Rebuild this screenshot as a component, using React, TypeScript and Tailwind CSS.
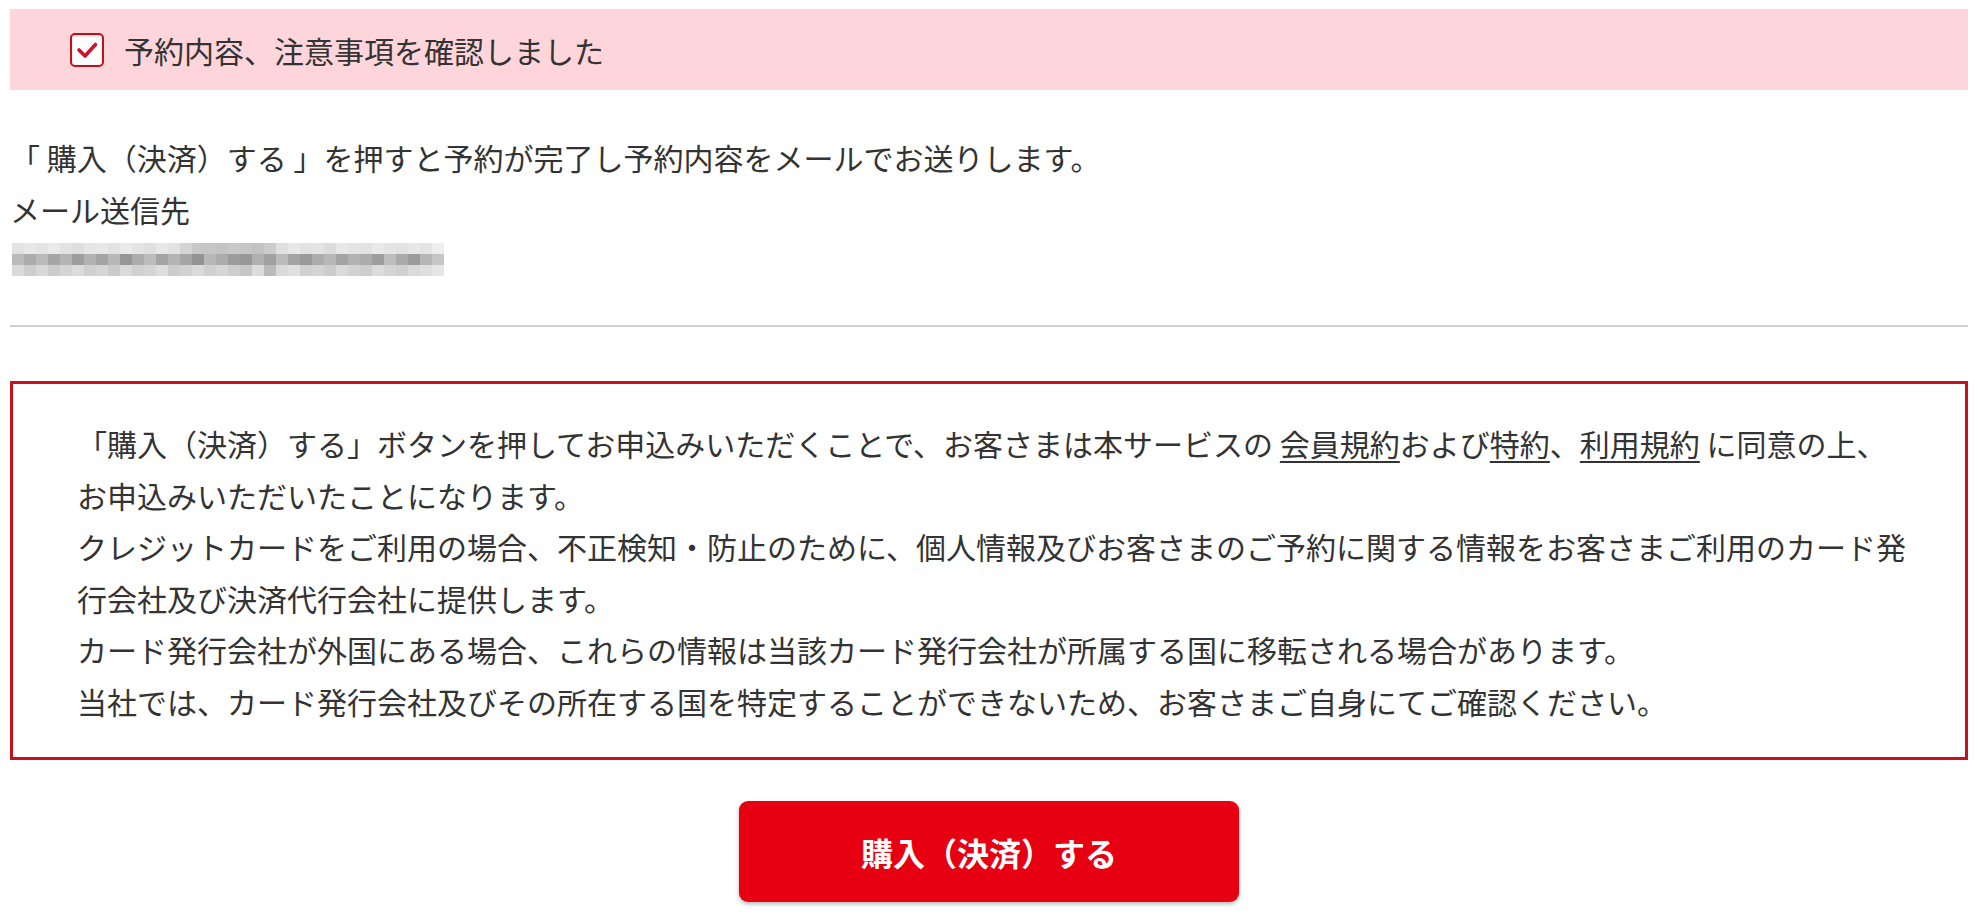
import React from 'react';

// pixelated e-mail address (mosaic), grey levels per cell
const mosaic: number[][] = [
    [226, 232, 228, 234, 226, 222, 230, 232, 226, 234, 228, 224, 232, 226, 212, 200, 198, 196, 200, 198, 194, 204, 224, 232, 226, 228, 220, 232, 228, 226, 234, 228, 226, 232, 228, 238],
    [186, 172, 186, 166, 180, 158, 178, 164, 184, 150, 172, 188, 164, 180, 166, 148, 184, 172, 156, 152, 176, 160, 186, 164, 154, 172, 184, 164, 178, 172, 158, 190, 170, 156, 182, 198],
    [218, 206, 216, 204, 212, 220, 208, 214, 202, 218, 208, 212, 222, 204, 210, 218, 208, 214, 206, 198, 220, 186, 218, 224, 208, 212, 204, 218, 210, 206, 220, 212, 208, 218, 222, 230],
];

const CheckBox: React.FC = () => (
    <div className="w-[34px] h-[34px] shrink-0 rounded-[5px] border-[2px] border-[#b8141e] bg-white shadow-[inset_0_1px_3px_rgba(0,0,0,0.2)] flex items-center justify-center">
        <svg width="26" height="26" viewBox="0 0 26 26" fill="none">
            <path d="M5 13 L11 19 L21.5 7.5" stroke="#d3112b" strokeWidth="3.6" strokeLinecap="round" strokeLinejoin="round" />
        </svg>
    </div>
);

const Link: React.FC<{ children: React.ReactNode }> = ({ children }) => (
    <a className="underline decoration-2 underline-offset-[5px] text-[#333]">{children}</a>
);

export default function App() {
    return (
        <div className="min-h-[916px] bg-white px-[10px] pt-[9px] text-[#333] font-['Noto_Sans_CJK_JP','Noto_Sans',sans-serif]">
            <label className="h-[81px] bg-[#fdd5da] flex items-center pl-[60px] gap-[20px]">
                <CheckBox />
                <span className="text-[30px] leading-none">予約内容、注意事項を確認しました</span>
            </label>

            <div className="mt-[41px] text-[30px] leading-[52px]">
                <p>「 購入（決済）する 」を押すと予約が完了し予約内容をメールでお送りします。</p>
                <p>メール送信先</p>
            </div>

            <div className="mt-[8px] ml-[2px] flex flex-col w-fit">
                {mosaic.map((row, r) => (
                    <div key={r} className="flex">
                        {row.map((v, c) => (
                            <div key={c} className="w-[12px] h-[11px]" style={{ backgroundColor: `rgb(${v},${v},${v})` }} />
                        ))}
                    </div>
                ))}
            </div>

            <hr className="mt-[49px] border-0 h-[2px] bg-[#d0d0d0]" />

            <div className="mt-[54px] border-[3px] border-[#c6121f] pl-[64px] pr-[40px] pt-[34px] pb-[30px] text-[30px] leading-[51.5px]">
                <p>
                    「購入（決済）する」ボタンを押してお申込みいただくことで、お客さまは本サービスの <Link>会員規約</Link>および<Link>特約</Link>、<Link>利用規約</Link> に同意の上、
                    <br />
                    お申込みいただいたことになります。
                </p>
                <p>
                    クレジットカードをご利用の場合、不正検知・防止のために、個人情報及びお客さまのご予約に関する情報をお客さまご利用のカード発
                    <br />
                    行会社及び決済代行会社に提供します。
                </p>
                <p>カード発行会社が外国にある場合、これらの情報は当該カード発行会社が所属する国に移転される場合があります。</p>
                <p>当社では、カード発行会社及びその所在する国を特定することができないため、お客さまご自身にてご確認ください。</p>
            </div>

            <div className="mt-[41px] flex justify-center">
                <button className="w-[500px] h-[101px] rounded-[9px] bg-[#e60012] text-white text-[32px] font-bold shadow-[0_2px_4px_rgba(0,0,0,0.3)]">
                    購入（決済）する
                </button>
            </div>
        </div>
    );
}
